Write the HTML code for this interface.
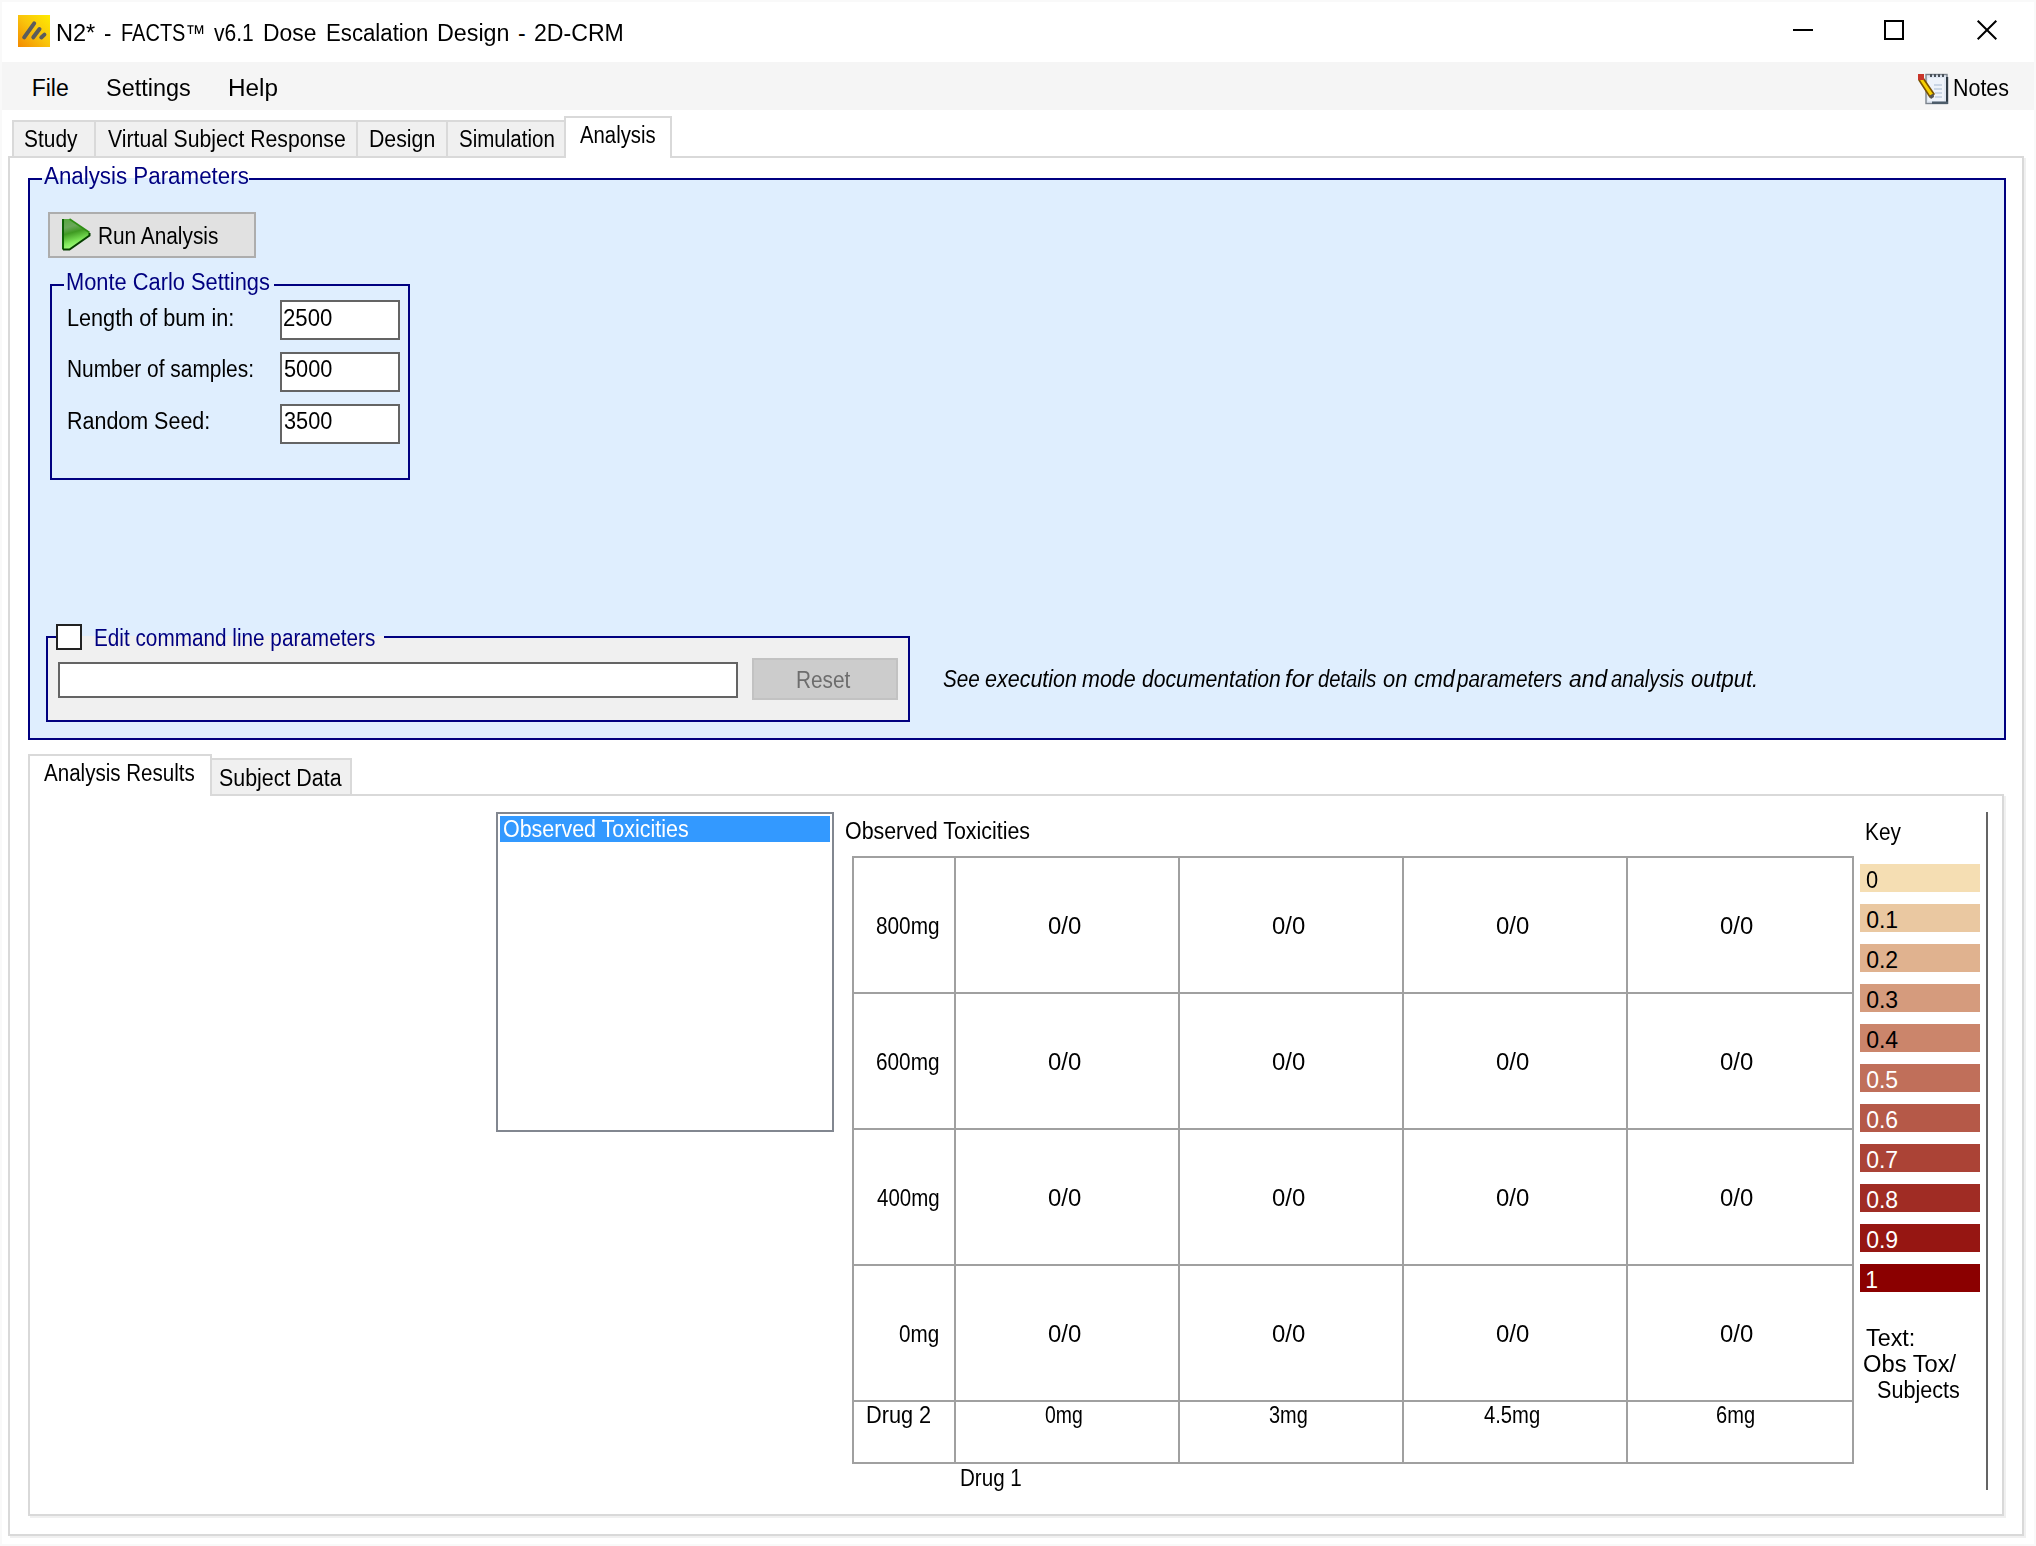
<!DOCTYPE html>
<html><head><meta charset="utf-8">
<style>
html,body{margin:0;padding:0;width:2036px;height:1546px;overflow:hidden;background:#fff;}
body{position:relative;font-family:"Liberation Sans",sans-serif;color:#000;}
.a{position:absolute;box-sizing:border-box;}
.t{position:absolute;white-space:pre;transform-origin:0 0;}
svg{position:absolute;}
</style></head><body>
<div class="a" style="left:0px;top:0px;width:2036px;height:1546px;border:2px solid #f9f9f9;"></div>
<svg style="left:18px;top:15px" width="32" height="32" viewBox="0 0 32 32"><defs><linearGradient id="ig" x1="1" y1="0" x2="0" y2="1"><stop offset="0" stop-color="#ffeb00"/><stop offset="0.5" stop-color="#f9c30c"/><stop offset="1" stop-color="#f38a00"/></linearGradient><filter id="bl" x="-20%" y="-20%" width="140%" height="140%"><feGaussianBlur stdDeviation="0.6"/></filter></defs><rect width="32" height="32" fill="url(#ig)"/><g stroke="#5b5b5b" stroke-width="4" stroke-linecap="round" fill="none" filter="url(#bl)"><line x1="6.2" y1="22.3" x2="16.2" y2="8.4"/><line x1="15.3" y1="22.3" x2="21.5" y2="14"/><line x1="23.3" y1="22.5" x2="26.4" y2="19.6"/></g></svg>
<div class="t" style="left:55.58px;top:22px;font-size:23px;line-height:23px;transform:scaleX(1.0240);">N2*</div>
<div class="t" style="left:104.33px;top:22px;font-size:23px;line-height:23px;transform:scaleX(0.9667);">-</div>
<div class="t" style="left:121.33px;top:22px;font-size:23px;line-height:23px;transform:scaleX(0.8691);">FACTS™</div>
<div class="t" style="left:214.30px;top:22px;font-size:23px;line-height:23px;transform:scaleX(0.9137);">v6.1</div>
<div class="t" style="left:263.41px;top:22px;font-size:23px;line-height:23px;transform:scaleX(0.9942);">Dose</div>
<div class="t" style="left:326.03px;top:22px;font-size:23px;line-height:23px;transform:scaleX(0.9653);">Escalation</div>
<div class="t" style="left:436.99px;top:22px;font-size:23px;line-height:23px;transform:scaleX(1.0129);">Design</div>
<div class="t" style="left:518.00px;top:22px;font-size:23px;line-height:23px;">-</div>
<div class="t" style="left:534.20px;top:22px;font-size:23px;line-height:23px;transform:scaleX(1.0048);">2D-CRM</div>
<div class="a" style="left:1793px;top:29px;width:20px;height:2px;background:#000;"></div>
<div class="a" style="left:1884px;top:20px;width:20px;height:20px;border:2px solid #000;"></div>
<svg style="left:1976px;top:19px" width="22" height="22" viewBox="0 0 22 22"><path d="M1.7 1.7L20.3 20.3M20.3 1.7L1.7 20.3" stroke="#000" stroke-width="2"/></svg>
<div class="a" style="left:2px;top:62px;width:2032px;height:48px;background:#f5f5f5;"></div>
<div class="t" style="left:31.70px;top:77px;font-size:23px;line-height:23px;">File</div>
<div class="t" style="left:105.58px;top:77px;font-size:23px;line-height:23px;transform:scaleX(1.0195);">Settings</div>
<div class="t" style="left:227.54px;top:77px;font-size:23px;line-height:23px;transform:scaleX(1.0569);">Help</div>
<div class="t" style="left:1953.07px;top:77px;font-size:23px;line-height:23px;transform:scaleX(0.9320);">Notes</div>
<svg style="left:1912px;top:70px" width="40" height="40" viewBox="0 0 40 40">
<rect x="14" y="4.5" width="21" height="29" fill="#dfe7f2" stroke="#7b838c" stroke-width="1.4"/>
<rect x="16" y="8" width="16" height="23" fill="#eef3fa"/>
<rect x="34" y="7" width="2.2" height="27" fill="#2f3b45"/>
<rect x="20" y="31.5" width="16" height="2.5" fill="#4d5d6a"/>
<g fill="#4a525a"><rect x="18" y="4" width="2" height="3"/><rect x="22" y="4" width="2" height="3"/><rect x="26" y="4" width="2" height="3"/><rect x="30" y="4" width="2" height="3"/></g>
<g stroke="#b7c6da" stroke-width="1.3"><line x1="22" y1="15" x2="30" y2="15"/><line x1="22" y1="19" x2="30" y2="19"/><line x1="23" y1="23" x2="30" y2="23"/><line x1="23" y1="27" x2="30" y2="27"/></g>
<path d="M7 10 L11 8 L22 24 L18 27 Z" fill="#f7d000" stroke="#7a5200" stroke-width="1.6" stroke-linejoin="round"/>
<path d="M17 26 L21.5 23.5 L22 27 L19 29 Z" fill="#555" />
<rect x="6" y="4" width="6" height="6" fill="#c8352a"/>
</svg>
<div class="a" style="left:8px;top:156px;width:2016px;height:1380px;border:2px solid #d9d9d9;"></div>
<div class="a" style="left:2024px;top:158px;width:2px;height:1380px;background:#f0f0f0;"></div>
<div class="a" style="left:10px;top:1536px;width:2016px;height:2px;background:#f0f0f0;"></div>
<div class="a" style="left:12px;top:120px;width:554px;height:38px;border:2px solid #d9d9d9;background:#f0f0f0;"></div>
<div class="a" style="left:94px;top:121px;width:2px;height:36px;background:#d9d9d9;"></div>
<div class="a" style="left:356px;top:121px;width:2px;height:36px;background:#d9d9d9;"></div>
<div class="a" style="left:446px;top:121px;width:2px;height:36px;background:#d9d9d9;"></div>
<div class="t" style="left:23.69px;top:128px;font-size:23px;line-height:23px;transform:scaleX(0.9089);">Study</div>
<div class="t" style="left:108.00px;top:128px;font-size:23px;line-height:23px;transform:scaleX(0.9220);">Virtual Subject Response</div>
<div class="t" style="left:369.07px;top:128px;font-size:23px;line-height:23px;transform:scaleX(0.9255);">Design</div>
<div class="t" style="left:459.11px;top:128px;font-size:23px;line-height:23px;transform:scaleX(0.8930);">Simulation</div>
<div class="a" style="left:564px;top:116px;width:108px;height:42px;border:2px solid #d9d9d9;background:#fff;border-bottom:none;"></div>
<div class="t" style="left:580.40px;top:124px;font-size:23px;line-height:23px;transform:scaleX(0.8832);">Analysis</div>
<div class="a" style="left:28px;top:178px;width:1978px;height:562px;border:2px solid #000080;background:#dfeefe;"></div>
<div class="a" style="left:42px;top:178px;width:207px;height:2px;background:#dfeefe;"></div>
<div class="a" style="left:42px;top:170px;width:207px;height:8px;background:#fff;"></div>
<div class="t" style="left:44.30px;top:165px;font-size:23px;line-height:23px;transform:scaleX(0.9710);color:#000080;">Analysis Parameters</div>
<div class="a" style="left:48px;top:212px;width:208px;height:46px;border:2px solid #adadad;background:#e1e1e1;"></div>
<svg style="left:60px;top:216px" width="34" height="38" viewBox="0 0 34 38">
<defs><linearGradient id="gg" x1="0" y1="0" x2="0.25" y2="1"><stop offset="0" stop-color="#55a83c"/><stop offset="0.3" stop-color="#6aa85a"/><stop offset="0.5" stop-color="#3f9a22"/><stop offset="0.8" stop-color="#7fe85a"/><stop offset="1" stop-color="#a3ff80"/></linearGradient></defs>
<path d="M2.5 3 L9.5 3 L29.5 16.5 L29.5 19.5 L9.5 33.5 L2.5 33.5 Z" fill="url(#gg)"/>
<path d="M3 3 L3 33.5" stroke="#0d6306" stroke-width="2"/>
<path d="M9.5 3 L29.5 16.5" stroke="#2f8f14" stroke-width="1.6"/>
<path d="M29.5 17 L29.5 19.5 L9.5 33.5 L3 33.5" stroke="#063f00" stroke-width="2" fill="none"/>
</svg>
<div class="t" style="left:97.60px;top:225px;font-size:23px;line-height:23px;transform:scaleX(0.9049);">Run Analysis</div>
<div class="a" style="left:50px;top:284px;width:360px;height:196px;border:2px solid #000080;"></div>
<div class="a" style="left:64px;top:284px;width:210px;height:2px;background:#dfeefe;"></div>
<div class="t" style="left:66.35px;top:271px;font-size:23px;line-height:23px;transform:scaleX(0.9490);color:#000080;">Monte Carlo Settings</div>
<div class="t" style="left:67.06px;top:307px;font-size:23px;line-height:23px;transform:scaleX(0.9410);">Length of bum in:</div>
<div class="a" style="left:280px;top:300px;width:120px;height:40px;border:2px solid #646464;background:#fff;"></div>
<div class="t" style="left:282.64px;top:307px;font-size:23px;line-height:23px;transform:scaleX(0.9641);">2500</div>
<div class="t" style="left:67.09px;top:358px;font-size:23px;line-height:23px;transform:scaleX(0.9085);">Number of samples:</div>
<div class="a" style="left:280px;top:352px;width:120px;height:40px;border:2px solid #646464;background:#fff;"></div>
<div class="t" style="left:283.60px;top:358px;font-size:23px;line-height:23px;transform:scaleX(0.9449);">5000</div>
<div class="t" style="left:67.07px;top:410px;font-size:23px;line-height:23px;transform:scaleX(0.9335);">Random Seed:</div>
<div class="a" style="left:280px;top:404px;width:120px;height:40px;border:2px solid #646464;background:#fff;"></div>
<div class="t" style="left:283.60px;top:410px;font-size:23px;line-height:23px;transform:scaleX(0.9449);">3500</div>
<div class="a" style="left:46px;top:636px;width:864px;height:86px;border:2px solid #000080;background:#f0f0f0;"></div>
<div class="a" style="left:48px;top:622px;width:336px;height:14px;background:#dfeefe;"></div>
<div class="a" style="left:82px;top:636px;width:302px;height:2px;background:#f0f0f0;"></div>
<div class="a" style="left:56px;top:624px;width:26px;height:26px;border:2px solid #222;background:#fff;"></div>
<div class="t" style="left:93.80px;top:627px;font-size:23px;line-height:23px;transform:scaleX(0.9017);color:#000080;">Edit command line parameters</div>
<div class="a" style="left:58px;top:662px;width:680px;height:36px;border:2px solid #646464;background:#fff;"></div>
<div class="a" style="left:752px;top:658px;width:146px;height:42px;border:2px solid #c2c2c2;background:#cccccc;"></div>
<div class="t" style="left:795.60px;top:669px;font-size:23px;line-height:23px;transform:scaleX(0.9046);color:#6d6d6d;">Reset</div>
<div class="t" style="left:942.50px;top:668px;font-size:23px;line-height:23px;transform:scaleX(0.8995);font-style:italic;">See</div>
<div class="t" style="left:985.30px;top:668px;font-size:23px;line-height:23px;transform:scaleX(0.9348);font-style:italic;">execution</div>
<div class="t" style="left:1081.80px;top:668px;font-size:23px;line-height:23px;transform:scaleX(0.9340);font-style:italic;">mode</div>
<div class="t" style="left:1142.20px;top:668px;font-size:23px;line-height:23px;transform:scaleX(0.9201);font-style:italic;">documentation</div>
<div class="t" style="left:1284.70px;top:668px;font-size:23px;line-height:23px;transform:scaleX(1.0468);font-style:italic;">for</div>
<div class="t" style="left:1317.90px;top:668px;font-size:23px;line-height:23px;transform:scaleX(0.8793);font-style:italic;">details</div>
<div class="t" style="left:1382.70px;top:668px;font-size:23px;line-height:23px;transform:scaleX(0.9519);font-style:italic;">on</div>
<div class="t" style="left:1413.60px;top:668px;font-size:23px;line-height:23px;transform:scaleX(0.9405);font-style:italic;">cmd</div>
<div class="t" style="left:1457.40px;top:668px;font-size:23px;line-height:23px;transform:scaleX(0.9039);font-style:italic;">parameters</div>
<div class="t" style="left:1569.00px;top:668px;font-size:23px;line-height:23px;transform:scaleX(0.9929);font-style:italic;">and</div>
<div class="t" style="left:1611.20px;top:668px;font-size:23px;line-height:23px;transform:scaleX(0.8816);font-style:italic;">analysis</div>
<div class="t" style="left:1690.80px;top:668px;font-size:23px;line-height:23px;transform:scaleX(0.9537);font-style:italic;">output.</div>
<div class="a" style="left:28px;top:794px;width:1976px;height:722px;border:2px solid #d9d9d9;"></div>
<div class="a" style="left:2004px;top:796px;width:2px;height:722px;background:#f0f0f0;"></div>
<div class="a" style="left:30px;top:1516px;width:1976px;height:2px;background:#f0f0f0;"></div>
<div class="a" style="left:210px;top:758px;width:142px;height:38px;border:2px solid #d9d9d9;background:#f0f0f0;"></div>
<div class="a" style="left:28px;top:754px;width:184px;height:42px;border:2px solid #d9d9d9;background:#fff;border-bottom:none;"></div>
<div class="t" style="left:44.20px;top:762px;font-size:23px;line-height:23px;transform:scaleX(0.8934);">Analysis Results</div>
<div class="t" style="left:219.07px;top:767px;font-size:23px;line-height:23px;transform:scaleX(0.9305);">Subject Data</div>
<div class="a" style="left:496px;top:812px;width:338px;height:320px;border:2px solid #828790;background:#fff;"></div>
<div class="a" style="left:500px;top:816px;width:330px;height:26px;background:#3399ff;"></div>
<div class="t" style="left:503.27px;top:818px;font-size:23px;line-height:23px;transform:scaleX(0.9328);color:#fff;">Observed Toxicities</div>
<div class="t" style="left:845.07px;top:820px;font-size:23px;line-height:23px;transform:scaleX(0.9297);">Observed Toxicities</div>
<div class="a" style="left:852px;top:856px;width:1002px;height:608px;border:2px solid #a0a0a0;"></div>
<div class="a" style="left:954px;top:856px;width:2px;height:608px;background:#a0a0a0;"></div>
<div class="a" style="left:1178px;top:856px;width:2px;height:608px;background:#a0a0a0;"></div>
<div class="a" style="left:1402px;top:856px;width:2px;height:608px;background:#a0a0a0;"></div>
<div class="a" style="left:1626px;top:856px;width:2px;height:608px;background:#a0a0a0;"></div>
<div class="a" style="left:852px;top:992px;width:1002px;height:2px;background:#a0a0a0;"></div>
<div class="a" style="left:852px;top:1128px;width:1002px;height:2px;background:#a0a0a0;"></div>
<div class="a" style="left:852px;top:1264px;width:1002px;height:2px;background:#a0a0a0;"></div>
<div class="a" style="left:852px;top:1400px;width:1002px;height:2px;background:#a0a0a0;"></div>
<div class="t" style="left:875.60px;top:915px;font-size:23px;line-height:23px;transform:scaleX(0.9032);">800mg</div>
<div class="t" style="left:1047.80px;top:915px;font-size:23px;line-height:23px;transform:scaleX(1.0391);">0/0</div>
<div class="t" style="left:1271.80px;top:915px;font-size:23px;line-height:23px;transform:scaleX(1.0391);">0/0</div>
<div class="t" style="left:1495.80px;top:915px;font-size:23px;line-height:23px;transform:scaleX(1.0391);">0/0</div>
<div class="t" style="left:1719.80px;top:915px;font-size:23px;line-height:23px;transform:scaleX(1.0391);">0/0</div>
<div class="t" style="left:875.60px;top:1051px;font-size:23px;line-height:23px;transform:scaleX(0.9032);">600mg</div>
<div class="t" style="left:1047.80px;top:1051px;font-size:23px;line-height:23px;transform:scaleX(1.0391);">0/0</div>
<div class="t" style="left:1271.80px;top:1051px;font-size:23px;line-height:23px;transform:scaleX(1.0391);">0/0</div>
<div class="t" style="left:1495.80px;top:1051px;font-size:23px;line-height:23px;transform:scaleX(1.0391);">0/0</div>
<div class="t" style="left:1719.80px;top:1051px;font-size:23px;line-height:23px;transform:scaleX(1.0391);">0/0</div>
<div class="t" style="left:876.50px;top:1187px;font-size:23px;line-height:23px;transform:scaleX(0.8902);">400mg</div>
<div class="t" style="left:1047.80px;top:1187px;font-size:23px;line-height:23px;transform:scaleX(1.0391);">0/0</div>
<div class="t" style="left:1271.80px;top:1187px;font-size:23px;line-height:23px;transform:scaleX(1.0391);">0/0</div>
<div class="t" style="left:1495.80px;top:1187px;font-size:23px;line-height:23px;transform:scaleX(1.0391);">0/0</div>
<div class="t" style="left:1719.80px;top:1187px;font-size:23px;line-height:23px;transform:scaleX(1.0391);">0/0</div>
<div class="t" style="left:898.90px;top:1323px;font-size:23px;line-height:23px;transform:scaleX(0.8987);">0mg</div>
<div class="t" style="left:1047.80px;top:1323px;font-size:23px;line-height:23px;transform:scaleX(1.0391);">0/0</div>
<div class="t" style="left:1271.80px;top:1323px;font-size:23px;line-height:23px;transform:scaleX(1.0391);">0/0</div>
<div class="t" style="left:1495.80px;top:1323px;font-size:23px;line-height:23px;transform:scaleX(1.0391);">0/0</div>
<div class="t" style="left:1719.80px;top:1323px;font-size:23px;line-height:23px;transform:scaleX(1.0391);">0/0</div>
<div class="t" style="left:865.56px;top:1404px;font-size:23px;line-height:23px;transform:scaleX(0.9443);">Drug 2</div>
<div class="t" style="left:1045.45px;top:1404px;font-size:23px;line-height:23px;transform:scaleX(0.8441);">0mg</div>
<div class="t" style="left:1268.95px;top:1404px;font-size:23px;line-height:23px;transform:scaleX(0.8669);">3mg</div>
<div class="t" style="left:1484.25px;top:1404px;font-size:23px;line-height:23px;transform:scaleX(0.8791);">4.5mg</div>
<div class="t" style="left:1716.38px;top:1404px;font-size:23px;line-height:23px;transform:scaleX(0.8731);">6mg</div>
<div class="t" style="left:960.10px;top:1467px;font-size:23px;line-height:23px;transform:scaleX(0.8953);">Drug 1</div>
<div class="t" style="left:1865.30px;top:821px;font-size:23px;line-height:23px;transform:scaleX(0.9046);">Key</div>
<div class="a" style="left:1860px;top:864px;width:120px;height:28px;background:rgb(245,222,179);"></div>
<div class="t" style="left:1866.20px;top:869px;font-size:23px;line-height:23px;transform:scaleX(0.9500);color:#000;">0</div>
<div class="a" style="left:1860px;top:904px;width:120px;height:28px;background:rgb(234,200,161);"></div>
<div class="t" style="left:1866.20px;top:909px;font-size:23px;line-height:23px;color:#000;">0.1</div>
<div class="a" style="left:1860px;top:944px;width:120px;height:28px;background:rgb(224,178,143);"></div>
<div class="t" style="left:1866.20px;top:949px;font-size:23px;line-height:23px;color:#000;">0.2</div>
<div class="a" style="left:1860px;top:984px;width:120px;height:28px;background:rgb(213,155,125);"></div>
<div class="t" style="left:1866.20px;top:989px;font-size:23px;line-height:23px;color:#000;">0.3</div>
<div class="a" style="left:1860px;top:1024px;width:120px;height:28px;background:rgb(203,133,107);"></div>
<div class="t" style="left:1866.20px;top:1029px;font-size:23px;line-height:23px;color:#000;">0.4</div>
<div class="a" style="left:1860px;top:1064px;width:120px;height:28px;background:rgb(192,111,90);"></div>
<div class="t" style="left:1866.20px;top:1069px;font-size:23px;line-height:23px;color:#fff;">0.5</div>
<div class="a" style="left:1860px;top:1104px;width:120px;height:28px;background:rgb(181,89,72);"></div>
<div class="t" style="left:1866.20px;top:1109px;font-size:23px;line-height:23px;color:#fff;">0.6</div>
<div class="a" style="left:1860px;top:1144px;width:120px;height:28px;background:rgb(171,67,54);"></div>
<div class="t" style="left:1866.20px;top:1149px;font-size:23px;line-height:23px;color:#fff;">0.7</div>
<div class="a" style="left:1860px;top:1184px;width:120px;height:28px;background:rgb(160,44,36);"></div>
<div class="t" style="left:1866.20px;top:1189px;font-size:23px;line-height:23px;color:#fff;">0.8</div>
<div class="a" style="left:1860px;top:1224px;width:120px;height:28px;background:rgb(150,22,18);"></div>
<div class="t" style="left:1866.20px;top:1229px;font-size:23px;line-height:23px;color:#fff;">0.9</div>
<div class="a" style="left:1860px;top:1264px;width:120px;height:28px;background:rgb(139,0,0);"></div>
<div class="t" style="left:1865.20px;top:1269px;font-size:23px;line-height:23px;color:#fff;">1</div>
<div class="a" style="left:1986px;top:812px;width:2px;height:678px;background:#646464;"></div>
<div class="t" style="left:1865.80px;top:1327px;font-size:23px;line-height:23px;transform:scaleX(1.0152);">Text:</div>
<div class="t" style="left:1863.37px;top:1353px;font-size:23px;line-height:23px;transform:scaleX(1.0314);">Obs Tox/</div>
<div class="t" style="left:1877.46px;top:1379px;font-size:23px;line-height:23px;transform:scaleX(0.9387);">Subjects</div>
</body></html>
